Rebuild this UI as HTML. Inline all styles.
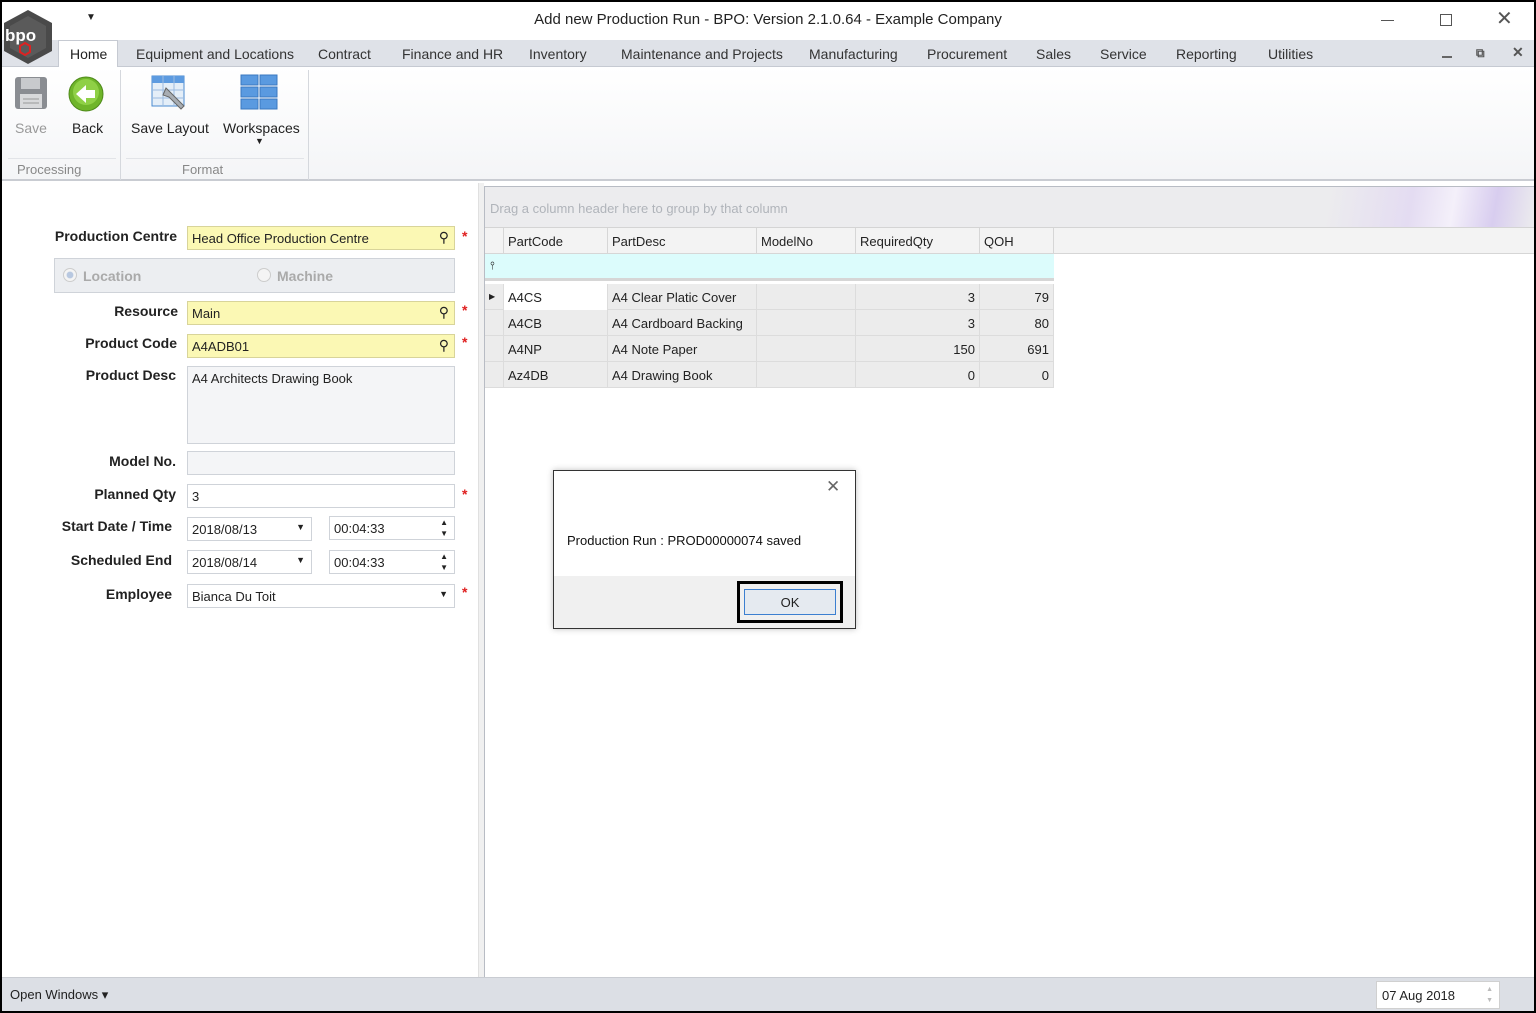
<!DOCTYPE html>
<html><head><style>
*{margin:0;padding:0;box-sizing:border-box}
body{width:1536px;height:1013px;position:relative;overflow:hidden;background:#000;font-family:"Liberation Sans",sans-serif;font-size:13px;color:#222}
.a{position:absolute}
.lbl{position:absolute;font-weight:bold;font-size:14px;color:#222;text-align:right;width:180px}
.in{position:absolute;border:1px solid #cfd3d9;background:#fff;height:24px;font-size:13px;padding:4px 4px;color:#222}
.y{background:#fbf8b4;border-color:#d8d49a}
.star{position:absolute;color:#e02020;font-size:14px;font-weight:bold}
.tab{position:absolute;top:46px;font-size:14px;color:#333}
.th{position:absolute;top:0;height:26px;border-right:1px solid #d6d6d6;padding:6px 4px;font-size:13px}
.row{position:absolute;left:0;width:569px;height:26px;border-bottom:1px solid #dcdcdc;background:#ececec}
.c{position:absolute;top:0;height:26px;border-right:1px solid #dcdcdc;padding:6px 4px;font-size:13px}
.r{text-align:right}
</style></head><body>
<div class="a" style="left:2px;top:2px;width:1532px;height:1009px;background:#fff"></div>
<div class="a" style="left:2px;top:2px;width:1532px;height:38px;background:#fff"></div>
<div class="a" style="left:86px;top:12px;font-size:10px">▼</div>
<div class="a" style="left:0;width:1536px;top:11px;text-align:center;font-size:15px;color:#222">Add new Production Run - BPO: Version 2.1.0.64 - Example Company</div>
<div class="a" style="left:1381px;top:20px;width:13px;height:1px;background:#555"></div>
<div class="a" style="left:1440px;top:14px;width:12px;height:12px;border:1px solid #555"></div>
<div class="a" style="left:1496px;top:6px;font-size:20px;color:#555">✕</div>
<div class="a" style="left:2px;top:40px;width:1532px;height:27px;background:#dfe2e8;border-bottom:1px solid #c6cad2"></div>
<div class="a" style="left:58px;top:40px;width:60px;height:28px;background:#fff;border:1px solid #c6cad2;border-bottom:none"></div>
<svg class="a" style="left:2px;top:8px" width="52" height="58" viewBox="0 0 52 58"><polygon points="26,2 50,15 50,43 26,56 2,43 2,15" fill="#4a4a4a"/><polygon points="26,8 44,18 44,40 26,50 8,40 8,18" fill="#5a5a5a"/><text x="3" y="33" font-size="17" fill="#fff" font-family="Liberation Sans" font-weight="bold">bpo</text><polygon points="18,38 23,35 28,38 28,44 23,47 18,44" fill="none" stroke="#d22" stroke-width="2"/></svg>
<div class="tab" style="left:70px;color:#222">Home</div>
<div class="tab" style="left:136px">Equipment and Locations</div>
<div class="tab" style="left:318px">Contract</div>
<div class="tab" style="left:402px">Finance and HR</div>
<div class="tab" style="left:529px">Inventory</div>
<div class="tab" style="left:621px">Maintenance and Projects</div>
<div class="tab" style="left:809px">Manufacturing</div>
<div class="tab" style="left:927px">Procurement</div>
<div class="tab" style="left:1036px">Sales</div>
<div class="tab" style="left:1100px">Service</div>
<div class="tab" style="left:1176px">Reporting</div>
<div class="tab" style="left:1268px">Utilities</div>
<div class="a" style="left:1442px;top:56px;width:10px;height:2px;background:#666"></div>
<div class="a" style="left:1476px;top:46px;font-size:12px;color:#555;font-weight:bold">⧉</div>
<div class="a" style="left:1512px;top:44px;font-size:14px;color:#555;font-weight:bold">✕</div>
<div class="a" style="left:2px;top:67px;width:1532px;height:114px;background:linear-gradient(#fff,#f4f5f7);border-bottom:2px solid #c9ccd2"></div>
<div class="a" style="left:120px;top:70px;width:1px;height:110px;background:#d5d8dd"></div>
<div class="a" style="left:308px;top:70px;width:1px;height:110px;background:#d5d8dd"></div>
<div class="a" style="left:8px;top:158px;width:108px;height:1px;background:#e2e4e8"></div>
<div class="a" style="left:126px;top:158px;width:178px;height:1px;background:#e2e4e8"></div>
<svg class="a" style="left:14px;top:76px" width="34" height="34"><rect x="1" y="1" width="32" height="32" rx="3" fill="#8a8d92"/><rect x="7" y="2" width="19" height="11" fill="#c8cacd"/><rect x="6" y="18" width="22" height="14" fill="#d8d9db"/><line x1="9" y1="23" x2="25" y2="23" stroke="#999"/><line x1="9" y1="27" x2="25" y2="27" stroke="#999"/></svg>
<div class="a" style="left:15px;top:120px;font-size:14px;color:#999">Save</div>
<svg class="a" style="left:68px;top:76px" width="36" height="36"><circle cx="18" cy="18" r="17" fill="#6fb52a" stroke="#4e8a1a"/><circle cx="18" cy="16" r="13" fill="#8fd046"/><polygon points="8,18 18,9 18,14 27,14 27,22 18,22 18,27" fill="#fff"/></svg>
<div class="a" style="left:72px;top:120px;font-size:14px">Back</div>
<svg class="a" style="left:150px;top:74px" width="38" height="38"><rect x="2" y="2" width="32" height="30" fill="#e4eef8" stroke="#4a8ad0"/><rect x="2" y="2" width="32" height="7" fill="#5d9be0"/><line x1="2" y1="16" x2="34" y2="16" stroke="#9bbbe0"/><line x1="2" y1="24" x2="34" y2="24" stroke="#9bbbe0"/><line x1="13" y1="2" x2="13" y2="32" stroke="#9bbbe0"/><line x1="24" y1="2" x2="24" y2="32" stroke="#9bbbe0"/><path d="M16 14 l6 6 l12 12 l-3 3 l-12 -12 l-6 -2 z" fill="#a8adb3" stroke="#666"/></svg>
<div class="a" style="left:131px;top:120px;font-size:14px">Save Layout</div>
<svg class="a" style="left:240px;top:74px" width="38" height="38"><g fill="#5a9ae0" stroke="#3a78c0"><rect x="1" y="1" width="17" height="10"/><rect x="20" y="1" width="17" height="10"/><rect x="1" y="13" width="17" height="10"/><rect x="20" y="13" width="17" height="10"/><rect x="1" y="25" width="17" height="10"/><rect x="20" y="25" width="17" height="10"/></g></svg>
<div class="a" style="left:223px;top:120px;font-size:14px">Workspaces</div>
<div class="a" style="left:255px;top:136px;font-size:9px">▼</div>
<div class="a" style="left:17px;top:162px;font-size:13px;color:#888">Processing</div>
<div class="a" style="left:182px;top:162px;font-size:13px;color:#888">Format</div>
<div class="a" style="left:478px;top:183px;width:6px;height:794px;background:#f0f0f0;border-left:1px solid #e0e0e0"></div>
<div class="lbl" style="left:-3px;top:228px">Production Centre</div>
<div class="in y" style="left:187px;top:226px;width:268px">Head Office Production Centre<span style="position:absolute;right:5px;top:2px;font-size:14px">⚲</span></div>
<div class="star" style="left:462px;top:228px">*</div>
<div class="a" style="left:54px;top:258px;width:401px;height:35px;background:#eceef1;border:1px solid #cfd3d9"></div>
<div class="a" style="left:63px;top:268px;width:14px;height:14px;border-radius:50%;border:1px solid #ccc;background:radial-gradient(#b8c8e0 35%,#f4f4f4 45%)"></div>
<div class="a" style="left:83px;top:268px;font-weight:bold;color:#aaa;font-size:14px">Location</div>
<div class="a" style="left:257px;top:268px;width:14px;height:14px;border-radius:50%;border:1px solid #ccc;background:#f4f4f4"></div>
<div class="a" style="left:277px;top:268px;font-weight:bold;color:#aaa;font-size:14px">Machine</div>
<div class="lbl" style="left:-2px;top:303px">Resource</div>
<div class="in y" style="left:187px;top:301px;width:268px">Main<span style="position:absolute;right:5px;top:2px;font-size:14px">⚲</span></div>
<div class="star" style="left:462px;top:302px">*</div>
<div class="lbl" style="left:-3px;top:335px">Product Code</div>
<div class="in y" style="left:187px;top:334px;width:268px">A4ADB01<span style="position:absolute;right:5px;top:2px;font-size:14px">⚲</span></div>
<div class="star" style="left:462px;top:334px">*</div>
<div class="lbl" style="left:-4px;top:367px">Product Desc</div>
<div class="in" style="left:187px;top:366px;width:268px;height:78px;background:#f4f5f7">A4 Architects Drawing Book</div>
<div class="lbl" style="left:-4px;top:453px">Model No.</div>
<div class="in" style="left:187px;top:451px;width:268px;background:#f4f5f7"></div>
<div class="lbl" style="left:-4px;top:486px">Planned Qty</div>
<div class="in" style="left:187px;top:484px;width:268px">3</div>
<div class="star" style="left:462px;top:486px">*</div>
<div class="lbl" style="left:-8px;top:518px">Start Date / Time</div>
<div class="in" style="left:187px;top:517px;width:125px">2018/08/13<span style="position:absolute;right:6px;top:4px;font-size:9px">▼</span></div>
<div class="in" style="left:329px;top:516px;width:126px">00:04:33<span style="position:absolute;right:6px;top:0;font-size:8px;line-height:11px">▲<br>▼</span></div>
<div class="lbl" style="left:-8px;top:552px">Scheduled End</div>
<div class="in" style="left:187px;top:550px;width:125px">2018/08/14<span style="position:absolute;right:6px;top:4px;font-size:9px">▼</span></div>
<div class="in" style="left:329px;top:550px;width:126px">00:04:33<span style="position:absolute;right:6px;top:0;font-size:8px;line-height:11px">▲<br>▼</span></div>
<div class="lbl" style="left:-8px;top:586px">Employee</div>
<div class="in" style="left:187px;top:584px;width:268px">Bianca Du Toit<span style="position:absolute;right:6px;top:4px;font-size:9px">▼</span></div>
<div class="star" style="left:462px;top:584px">*</div>
<div class="a" style="left:484px;top:186px;width:1050px;height:791px;border-left:1px solid #b8bcc4;border-top:1px solid #b8bcc4;background:#fff"></div>
<div class="a" style="left:485px;top:187px;width:1049px;height:41px;background:linear-gradient(100deg,#ececee 80%,#e4dcf2 88%,#f4f0fa 92%,#d8cdef 96%,#ececee);border-bottom:1px solid #d4d4d4"></div>
<div class="a" style="left:490px;top:201px;color:#b0b4ba;font-size:13px">Drag a column header here to group by that column</div>
<div class="a" style="left:485px;top:228px;width:1049px;height:26px;background:#f3f3f3;border-bottom:1px solid #d6d6d6"></div>
<div class="a" style="left:485px;top:228px">
<div class="th" style="left:0;width:19px"></div>
<div class="th" style="left:19px;width:104px">PartCode</div>
<div class="th" style="left:123px;width:149px">PartDesc</div>
<div class="th" style="left:272px;width:99px">ModelNo</div>
<div class="th" style="left:371px;width:124px">RequiredQty</div>
<div class="th" style="left:495px;width:74px">QOH</div>
</div>
<div class="a" style="left:485px;top:254px;width:569px;height:27px;background:#dcfcfc;border-bottom:3px solid #d6d6d6"></div>
<div class="a" style="left:490px;top:260px;font-size:11px">⫯</div>
<div class="a" style="left:485px;top:284px;width:569px;height:106px">
<div class="row" style="top:0"><div class="c" style="left:0;width:19px;font-size:8px;padding-top:8px">▶</div><div class="c" style="left:19px;width:104px;background:#fff">A4CS</div><div class="c" style="left:123px;width:149px">A4 Clear Platic Cover</div><div class="c" style="left:272px;width:99px"></div><div class="c r" style="left:371px;width:124px">3</div><div class="c r" style="left:495px;width:74px">79</div></div>
<div class="row" style="top:26px"><div class="c" style="left:0;width:19px"></div><div class="c" style="left:19px;width:104px">A4CB</div><div class="c" style="left:123px;width:149px">A4 Cardboard Backing</div><div class="c" style="left:272px;width:99px"></div><div class="c r" style="left:371px;width:124px">3</div><div class="c r" style="left:495px;width:74px">80</div></div>
<div class="row" style="top:52px"><div class="c" style="left:0;width:19px"></div><div class="c" style="left:19px;width:104px">A4NP</div><div class="c" style="left:123px;width:149px">A4 Note Paper</div><div class="c" style="left:272px;width:99px"></div><div class="c r" style="left:371px;width:124px">150</div><div class="c r" style="left:495px;width:74px">691</div></div>
<div class="row" style="top:78px"><div class="c" style="left:0;width:19px"></div><div class="c" style="left:19px;width:104px">Az4DB</div><div class="c" style="left:123px;width:149px">A4 Drawing Book</div><div class="c" style="left:272px;width:99px"></div><div class="c r" style="left:371px;width:124px">0</div><div class="c r" style="left:495px;width:74px">0</div></div>
</div>
<div class="a" style="left:553px;top:470px;width:303px;height:159px;background:#fff;border:1px solid #333;box-shadow:0 0 6px rgba(0,0,0,.25)"></div>
<div class="a" style="left:826px;top:477px;font-size:17px;color:#666">✕</div>
<div class="a" style="left:567px;top:533px;font-size:13px;color:#111">Production Run : PROD00000074 saved</div>
<div class="a" style="left:554px;top:576px;width:301px;height:52px;background:#f0f0f0"></div>
<div class="a" style="left:737px;top:581px;width:106px;height:42px;border:3px solid #000"></div>
<div class="a" style="left:744px;top:589px;width:92px;height:26px;background:#e5eaf0;border:1px solid #3c7fd0;text-align:center;padding-top:5px;font-size:13px">OK</div>
<div class="a" style="left:2px;top:977px;width:1532px;height:34px;background:#dcdfe5;border-top:1px solid #c9ccd2"></div>
<div class="a" style="left:10px;top:987px;font-size:13px">Open Windows ▾</div>
<div class="a" style="left:1376px;top:981px;width:124px;height:28px;background:#fff;border:1px solid #d0d0d0;padding:6px 5px;font-size:13px">07 Aug 2018<span style="position:absolute;right:6px;top:2px;font-size:7px;color:#bbb;line-height:11px">▲<br>▼</span></div>
</body></html>
